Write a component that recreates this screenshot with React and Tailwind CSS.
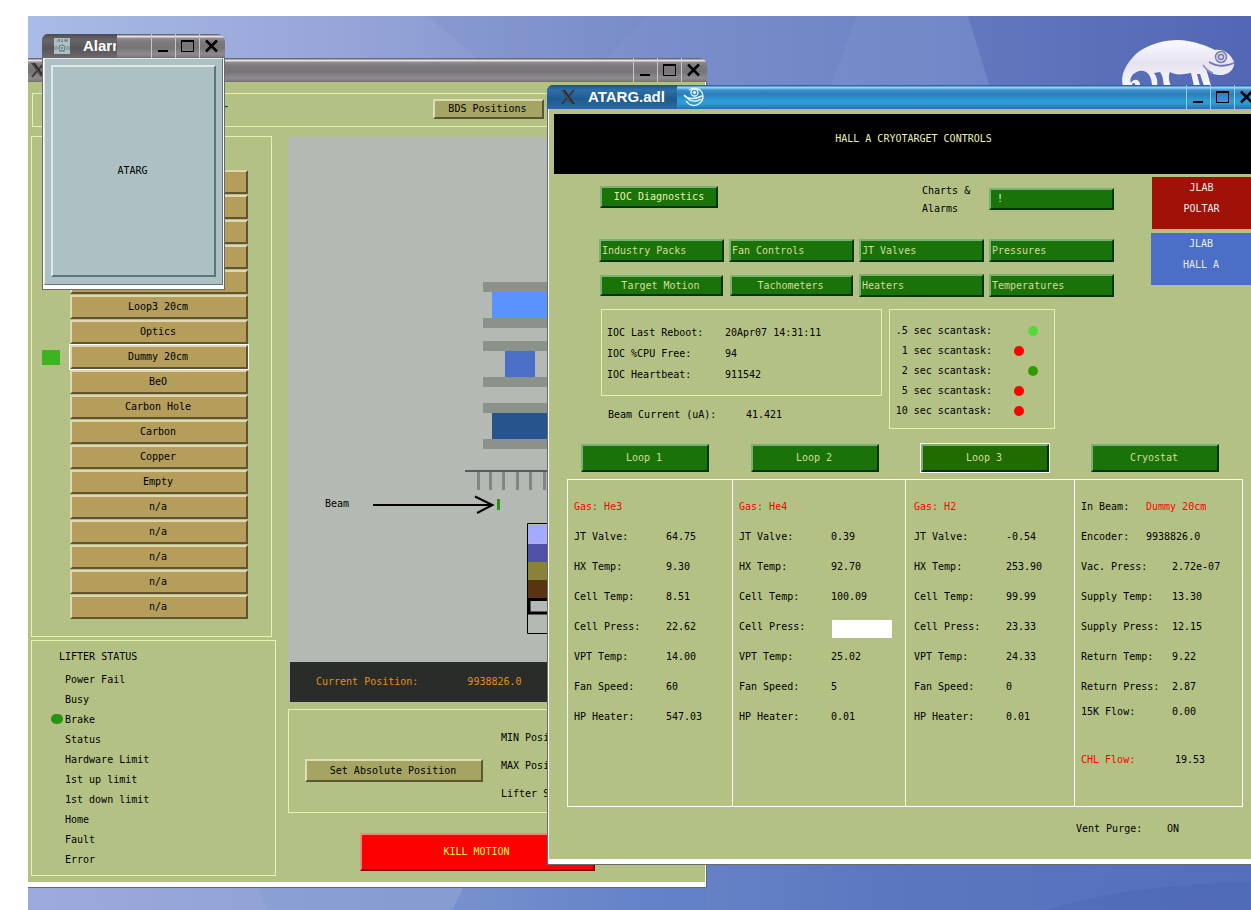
import clsx from 'clsx';

const TARGETS = ['', '', '', '', '', 'Loop3 20cm', 'Optics', 'Dummy 20cm', 'BeO', 'Carbon Hole', 'Carbon', 'Copper', 'Empty', 'n/a', 'n/a', 'n/a', 'n/a', 'n/a'];
const LIFTER = ['Power Fail', 'Busy', 'Brake', 'Status', 'Hardware Limit', '1st up limit', '1st down limit', 'Home', 'Fault', 'Error'];

const LOOPS = [
  { gas: 'He3', rows: [['JT Valve:', '64.75'], ['HX Temp:', '9.30'], ['Cell Temp:', '8.51'], ['Cell Press:', '22.62'], ['VPT Temp:', '14.00'], ['Fan Speed:', '60'], ['HP Heater:', '547.03']] },
  { gas: 'He4', rows: [['JT Valve:', '0.39'], ['HX Temp:', '92.70'], ['Cell Temp:', '100.09'], ['Cell Press:', null], ['VPT Temp:', '25.02'], ['Fan Speed:', '5'], ['HP Heater:', '0.01']] },
  { gas: 'H2', rows: [['JT Valve:', '-0.54'], ['HX Temp:', '253.90'], ['Cell Temp:', '99.99'], ['Cell Press:', '23.33'], ['VPT Temp:', '24.33'], ['Fan Speed:', '0'], ['HP Heater:', '0.01']] },
];

const CRYOSTAT = [['Vac. Press:', '2.72e-07'], ['Supply Temp:', '13.30'], ['Supply Press:', '12.15'], ['Return Temp:', '9.22'], ['Return Press:', '2.87']];

const SCANTASKS = [['.5 sec scantask:', 'ml-[36px] bg-[#52da3b]'], ['1 sec scantask:', 'ml-[22px] bg-[#fd0000]'], ['2 sec scantask:', 'ml-[36px] bg-[#339900]'], ['5 sec scantask:', 'ml-[22px] bg-[#fd0000]'], ['10 sec scantask:', 'ml-[22px] bg-[#fd0000]']];

const greyBar = 'bg-[linear-gradient(180deg,#6c696d_0px,#6c696d_1px,#e4e2e6_2px,#e4e2e6_3px,#918e92_4px,#7c797d_8px,#777478_14px,#8f8c90_20px,#757276_24px)]';
const blueBar = 'bg-[linear-gradient(180deg,#2a67a4_0px,#2a67a4_1px,#9ad6f6_2px,#8accf2_3px,#3f8fce_5px,#2c7fba_9px,#2f9dd6_16px,#2f98d0_19px,#2b6fae_24px)]';

function Wallpaper() {
  return (
    <svg className="absolute inset-0 h-full w-full" preserveAspectRatio="none" viewBox="0 0 1223 894" aria-hidden="true">
      <defs>
        <linearGradient id="sky" x1="0" x2="1" y1="0" y2="0">
          <stop offset="0" stopColor="#a9bbe6" />
          <stop offset="0.25" stopColor="#97a5d8" />
          <stop offset="0.5" stopColor="#7c8fcb" />
          <stop offset="0.75" stopColor="#6c82c4" />
          <stop offset="1" stopColor="#5569b6" />
        </linearGradient>
        <linearGradient id="ground" x1="0" x2="1" y1="0" y2="0">
          <stop offset="0" stopColor="#9daadc" />
          <stop offset="0.35" stopColor="#8a9dd2" />
          <stop offset="0.5" stopColor="#6a85c8" />
          <stop offset="0.7" stopColor="#5b77c0" />
          <stop offset="1" stopColor="#5470bb" />
        </linearGradient>
      </defs>
      <rect width="1223" height="894" fill="url(#sky)" />
      <path d="M400 0H620L560 60H470Z" fill="#7486c4" opacity="0.2" />
      <path d="M828 0H940L965 80H800Z" fill="#8098d2" opacity="0.3" />
      <path d="M940 0H1223V80H965Z" fill="#4b60b0" opacity="0.25" />
      <rect y="840" width="1223" height="54" fill="url(#ground)" />
      <path d="M228 860H420L436 894H238Z" fill="#7f9bd0" opacity="0.4" />
      <path d="M424 894L438 866H678V894Z" fill="#5c7fc8" opacity="0.4" />
      <path d="M1020 894Q1100 868 1223 866V894Z" fill="#4c63b4" opacity="0.4" />
    </svg>
  );
}

function Chameleon() {
  return (
    <svg className="absolute top-[22px] right-3.5 h-12 w-[120px]" viewBox="0 0 120 48" aria-hidden="true">
      <defs>
        <linearGradient id="skin" x1="0" x2="0" y1="0" y2="1">
          <stop offset="0" stopColor="#fbfafe" />
          <stop offset="0.5" stopColor="#e6e2f1" />
          <stop offset="1" stopColor="#f8f7fc" />
        </linearGradient>
      </defs>
      <path fill="url(#skin)" d="M6 48C3 38 8 26 20 15C32 6 46 2 62 2C78 3 90 8 98 12C107 11 113 16 116 22C120 27 114 38 102 37C97 37 92 34 89 31L91 37L94 48H87L83 36L80 36L83 48H77L74 35C64 37 58 37 53 34C51 38 52 43 54 48H47C46 42 46 38 43 34L37 35C40 39 41 43 40 48H35C35 38 30 31 22 33C15 35 12 41 14 45C17 39 24 42 23 48H18C19 45 17 44 15 46L15 48Z" />
      <circle cx="104" cy="19" r="5.500" fill="#d9d6ea" stroke="#7980b0" strokeWidth="1.5" />
      <circle cx="104" cy="19" r="2.500" fill="none" stroke="#7980b0" strokeWidth="1.5" />
      <path d="M92 24Q104 31 117 25" fill="none" stroke="#7077ae" strokeWidth="1.8" />
      <path d="M86 27Q90 33 96 35" fill="none" stroke="#8b90bd" strokeWidth="1.5" />
    </svg>
  );
}

function XIcon({ className }) {
  return (
    <svg className={className} width="16" height="16" viewBox="0 0 16 16" aria-hidden="true">
      <path d="M1 1H5L15 15H11Z" fill="#2c2c30" />
      <path d="M14 1L9 7M7 9L2 15" stroke="#3a3634" strokeWidth="1.800" />
      <path d="M2 1L12 15" stroke="#8d7c72" strokeWidth="0.6" />
    </svg>
  );
}

function AlhIcon() {
  return (
    <svg className="ml-3 shrink-0" width="16" height="16" viewBox="0 0 16 16" aria-hidden="true">
      <rect width="16" height="16" fill="#adc1c4" />
      <path d="M3 4L5 1L6 4M8 1V4H9M11 1V4M13 1V4M11 2.5H13" fill="none" stroke="#66797f" />
      <circle cx="8" cy="10" r="3" fill="none" stroke="#5f747c" />
      <circle cx="8" cy="10" r="1" fill="#5f747c" />
      <path d="M1 8V12M3 8V12M13 8V12M15 8V12M5 13H11" stroke="#718389" />
    </svg>
  );
}

function GeckoLogo() {
  return (
    <svg className="ml-1.5 shrink-0" width="22" height="22" viewBox="0 0 22 22" fill="none" stroke="#e8f7ff" aria-hidden="true">
      <path d="M6 4C12 0 19 3 20 10C20 17 13 22 6 18L3 15" strokeWidth="1.4" />
      <circle cx="11.500" cy="6.500" r="3.500" strokeWidth="1.3" />
      <circle cx="11.500" cy="6.500" r="1.200" fill="#e8f7ff" />
      <path d="M1 9C4 13 11 14 19 10M4 12C8 16 14 16 18 13" strokeWidth="1.5" />
    </svg>
  );
}

function WindowButtons({ blue }) {
  const btn = clsx('flex h-6 w-6 items-center justify-center border-l', blue ? 'border-[#8fc8f4]' : 'border-[#c9c6ca]');
  return (
    <div className="ml-auto flex shrink-0 pr-0.5">
      <button aria-label="Minimize" className={btn}>
        <svg width="14" height="14" viewBox="0 0 14 14"><path d="M1 12H11" stroke="#000" strokeWidth="2" /></svg>
      </button>
      <button aria-label="Maximize" className={btn}>
        <svg width="14" height="14" viewBox="0 0 14 14"><path d="M0.500 12.500V1.500H12.500V12.500Z" fill="none" stroke="#000" /><path d="M0 2H13" stroke="#000" strokeWidth="2" /></svg>
      </button>
      <button aria-label="Close" className={btn}>
        <svg width="14" height="14" viewBox="0 0 14 14"><path d="M1 1.500L12 12.500M1 12.500L12 1.500" fill="none" stroke="#000" strokeWidth="2.500" /></svg>
      </button>
    </div>
  );
}

function GreenButton({ children, className, ...rest }) {
  return (
    <button {...rest} className={clsx('border-2 border-t-[#78b173] border-r-[#083303] border-b-[#083303] border-l-[#78b173]', className)}>
      {children}
    </button>
  );
}

function AlarmWindow() {
  return (
    <section className="absolute top-[18px] left-[14px] w-[183px]">
      <header className={clsx('flex h-6 items-center overflow-hidden rounded-tl-md rounded-tr-lg', greyBar)}>
        <div className="flex h-6 w-[75px] items-center overflow-hidden bg-[linear-gradient(180deg,#4e4b4f,#69666a_6px,#58555a_14px,#6d6a6e)] font-[Liberation_Sans,sans-serif] text-[15px] font-bold text-white">
          <AlhIcon />
          <h2 className="ml-[13px] w-[33px] shrink-0 overflow-hidden whitespace-nowrap">Alarm</h2>
        </div>
        <WindowButtons />
      </header>
      <div className="border border-t-0 border-[#6c696d] bg-white px-px pb-1">
        <div className="border border-t-[#e0ebe8] border-r-[#5f7478] border-b-[#5f7478] border-l-[#e0ebe8] bg-[#adc1c4] px-1.5 pt-1.5 pb-[7px]">
          <button className="h-[212px] w-full border-2 border-t-[#dcebe8] border-r-[#5f7478] border-b-[#5f7478] border-l-[#dcebe8] pr-0.5">ATARG</button>
        </div>
      </div>
    </section>
  );
}

function TargetDrawing() {
  return (
    <svg className="block" width="412" height="525" viewBox="0 0 412 525" role="img" aria-label="Target ladder">
      <g fill="#8b9289">
        <path d="M195 145H412V155H195ZM195 181H412V191H195ZM195 204H412V214H195ZM195 240H412V250H195ZM195 266H412V276H195ZM195 302H412V312H195Z" />
      </g>
      <path d="M204 155H360V181H204Z" fill="#5893ff" />
      <path d="M217 214H247V240H217Z" fill="#4b6ec7" />
      <path d="M204 276H360V302H204Z" fill="#27548d" />
      <path d="M177 334H412" stroke="#5a5a5a" strokeWidth="2" />
      <path d="M190.500 335V353M202.500 335V353M215.500 335V353M229.500 335V353M242.500 335V353M256.500 335V353" stroke="#858585" strokeWidth="3" />
      <text x="37" y="370">Beam</text>
      <path d="M85 368H204" stroke="#000" strokeWidth="2" />
      <path d="M187 359.500L204.500 368L189 376" fill="none" stroke="#000" strokeWidth="2" />
      <path d="M209 362H212V373H209Z" fill="#289315" />
      <path d="M239.500 386.500H300V496.500H239.500Z" fill="none" stroke="#000" />
      <path d="M240 388H300V406H240Z" fill="#a4aaff" />
      <path d="M240 407H300V425H240Z" fill="#4d52a4" />
      <path d="M240 425H300V443H240Z" fill="#8b8239" />
      <path d="M240 443H300V461H240Z" fill="#58340f" />
      <path d="M241 462.500H300V476H241Z" fill="none" stroke="#000" strokeWidth="3" />
    </svg>
  );
}

function LifterWindow() {
  const frame = 'border border-[#e6f2b4]';
  const olive = 'border-2 border-t-[#dcdeb4] border-r-[#5a5832] border-b-[#5a5832] border-l-[#dcdeb4] bg-[#a6a462]';
  return (
    <section className="absolute top-[42px] left-0 w-[679px]">
      <header className={clsx('flex h-6 items-center overflow-hidden rounded-tr-lg', greyBar)}>
        <XIcon className="ml-0.5" />
        <WindowButtons />
      </header>
      <div className="border-r border-b border-[#6c696d] bg-white pr-px pb-[5px]">
        <div className="bg-[#b4c184] pt-[11px] pb-1.5">
          <div className={clsx('mx-1 flex h-[34px] items-start pt-[5px]', frame)}>
            <h2 className="w-[195px] pt-0.5 text-right">Hall A Target Lifter</h2>
            <button className={clsx('ml-[205px] h-5 w-[111px] pr-0.5 leading-4', olive)}>BDS Positions</button>
          </div>
          <div className="mt-[9px] ml-[3px] flex gap-3">
            <div className="flex w-[245px] shrink-0 flex-col gap-[3px]">
              <div className={clsx('mr-1 flex flex-col gap-px pt-[33px] pb-[17px] pl-2.5', frame)}>
                {TARGETS.map((name, i) => (
                  <div key={i} className="flex items-center gap-2.5">
                    <span className={clsx('h-[15px] w-[18px]', name === 'Dummy 20cm' && 'bg-[#3cb420]')} />
                    <button
                      aria-label={name || `Target ${i + 1}`}
                      className={clsx('h-6 w-[178px] border-2 border-t-[#e1d6b4] border-r-[#625430] border-b-[#625430] border-l-[#e1d6b4] bg-[#b59d5b] pr-0.5', name === 'Dummy 20cm' && 'ring-1 ring-white')}
                    >
                      {name}
                    </button>
                  </div>
                ))}
              </div>
              <div className={clsx('pt-1.5 pb-[5px] pl-[19px]', frame)}>
                <h3 className="mb-[3px] ml-2 h-5 leading-5">LIFTER STATUS</h3>
                <ul>
                  {LIFTER.map((s) => (
                    <li key={s} className="flex h-5 gap-0.5 leading-5">
                      <span className={clsx('mt-1 h-2.5 w-3 rounded-full', s === 'Brake' && 'bg-[#289315]')} />
                      {s}
                    </li>
                  ))}
                </ul>
              </div>
            </div>
            <div className="flex min-w-0 flex-1 flex-col pt-px">
              <div className="overflow-hidden bg-[#b3bab3]">
                <TargetDrawing />
                <div className="ml-0.5 flex h-10 items-center gap-[49px] bg-[#2a2c2a] pl-[26px] text-[#e19015]">
                  <span>Current Position:</span>
                  <span>9938826.0</span>
                </div>
              </div>
              <div className={clsx('mt-[7px] flex h-[104px] items-start gap-[18px] pl-4', frame)}>
                <button className={clsx('mt-[49px] h-[23px] w-[178px] pr-0.5', olive)}>Set Absolute Position</button>
                <div className="pt-[14px] leading-7">
                  <p>MIN Position</p>
                  <p>MAX Position</p>
                  <p>Lifter Speed</p>
                </div>
              </div>
              <button className="mt-5 ml-[72px] h-[38px] w-[235px] border-2 border-t-[#ff8080] border-r-[#820400] border-b-[#820400] border-l-[#ff8080] bg-[#fd0000] pr-0.5 text-[#fbf34a]">KILL MOTION</button>
            </div>
          </div>
        </div>
      </div>
    </section>
  );
}

function LoopTable({ loop }) {
  return (
    <table className="w-full table-fixed text-left">
      <colgroup>
        <col className="w-[92px]" />
        <col />
      </colgroup>
      <thead>
        <tr className="h-[30px] text-[#fd0000]">
          <th colSpan={2} className="font-normal">Gas: {loop.gas}</th>
        </tr>
      </thead>
      <tbody>
        {loop.rows.map(([label, value]) => (
          <tr key={label} className="h-[30px]">
            <th className="font-normal">{label}</th>
            <td>{value ?? <span className="mt-1 ml-px block h-[18px] w-[60px] bg-white" />}</td>
          </tr>
        ))}
      </tbody>
    </table>
  );
}

function CryostatTable() {
  return (
    <table className="w-full table-fixed text-left [&_th]:font-normal">
      <colgroup>
        <col className="w-[65px]" />
        <col className="w-[26px]" />
        <col />
      </colgroup>
      <tbody>
        <tr className="h-[30px]"><th>In Beam:</th><td colSpan={2} className="text-[#fd0000]">Dummy 20cm</td></tr>
        <tr className="h-[30px]"><th>Encoder:</th><td colSpan={2}>9938826.0</td></tr>
        {CRYOSTAT.map(([label, value]) => (
          <tr key={label} className="h-[30px]"><th colSpan={2}>{label}</th><td>{value}</td></tr>
        ))}
        <tr className="h-5"><th colSpan={2}>15K Flow:</th><td>0.00</td></tr>
        <tr className="h-[76px]"><th colSpan={2} className="text-[#fd0000]">CHL Flow:</th><td className="pl-[3px]">19.53</td></tr>
      </tbody>
    </table>
  );
}

function CryotargetWindow() {
  const menu = 'h-[23px] bg-[#1a7309] pl-px text-left text-[#d4db9d]';
  const push = 'bg-[#1a7309] pr-0.5 text-[#d4db9d]';
  const frame = 'border border-[#e6f2b4]';
  return (
    <section className="absolute top-[69px] -right-[9px] left-[519px]">
      <header className={clsx('flex h-6 items-center overflow-hidden rounded-t-md', blueBar)}>
        <div className="flex h-6 w-[130px] shrink-0 items-center bg-[linear-gradient(180deg,#1f4f88,#2f70a8_5px,#1f5a8f_14px,#2a6ca0)] font-[Liberation_Sans,sans-serif] text-[15px] font-bold text-white">
          <XIcon className="ml-[13px]" />
          <h1 className="ml-3">ATARG.adl</h1>
        </div>
        <GeckoLogo />
        <WindowButtons blue />
      </header>
      <div className="border border-t-0 border-[#6c696d] bg-white px-px pb-[5px]">
        <div className="bg-[#b4c184] pt-[5px] pb-5">
          <div className="mx-[5px] h-[60px] bg-black pt-[15px] pl-5 text-center leading-5 text-[#ebf1b5]">HALL A CRYOTARGET CONTROLS</div>

          <div className="flex items-start">
            <div className="ml-[50px] w-[515px] shrink-0 pt-2">
              <div className="flex h-9 items-start">
                <GreenButton className="mt-1 ml-px h-[22px] w-[118px] bg-[#1a7309] text-[#ebf1b5]">IOC Diagnostics</GreenButton>
                <label htmlFor="charts" className="ml-auto w-[67px] leading-[18px]">Charts &amp;<br />Alarms</label>
                <GreenButton id="charts" className="mt-1.5 h-[22px] w-[125px] bg-[#1a7309] pl-1.5 text-left text-[#ebf1b5]">!</GreenButton>
              </div>
              <div className="mt-[21px] grid grid-cols-4 gap-x-[5px] gap-y-3">
                <GreenButton className={menu}>Industry Packs</GreenButton>
                <GreenButton className={menu}>Fan Controls</GreenButton>
                <GreenButton className={menu}>JT Valves</GreenButton>
                <GreenButton className={menu}>Pressures</GreenButton>
                <GreenButton className={clsx('m-px', push)}>Target Motion</GreenButton>
                <GreenButton className={clsx('m-px', push)}>Tachometers</GreenButton>
                <GreenButton className={menu}>Heaters</GreenButton>
                <GreenButton className={menu}>Temperatures</GreenButton>
              </div>
            </div>
            <div className="mt-[3px] ml-[37px] flex w-[100px] shrink-0 flex-col gap-1 text-center leading-[21px] text-[#ececec]">
              <button className="ml-px h-[52px] bg-[#a01207] pb-2.5">JLAB<br />POLTAR</button>
              <button className="h-[52px] bg-[#4b6ec7] pb-2.5">JLAB<br />HALL A</button>
            </div>
          </div>

          <div className="mt-3 ml-[52px] flex items-start gap-[7px]">
            <div className="w-[281px]">
              <dl className={clsx('grid h-[87px] grid-cols-[118px_1fr] content-start pt-3 pl-[5px] leading-[21px]', frame)}>
                <dt>IOC Last Reboot:</dt><dd>20Apr07 14:31:11</dd>
                <dt>IOC %CPU Free:</dt><dd>94</dd>
                <dt>IOC Heartbeat:</dt><dd>911542</dd>
              </dl>
              <dl className="mt-[9px] ml-[7px] flex leading-5">
                <dt className="w-[138px]">Beam Current (uA):</dt><dd>41.421</dd>
              </dl>
            </div>
            <ul className={clsx('h-[120px] w-[166px] pt-[11px]', frame)}>
              {SCANTASKS.map(([label, dot]) => (
                <li key={label} className="flex h-5 items-center">
                  <span className="w-[102px] text-right">{label}</span>
                  <span className={clsx('h-2.5 w-2.5 rounded-full', dot)} />
                </li>
              ))}
            </ul>
          </div>

          <div className="mt-[15px] ml-8 flex gap-[42px]">
            <GreenButton className={clsx('h-7 w-32', push)}>Loop 1</GreenButton>
            <GreenButton className={clsx('h-7 w-32', push)}>Loop 2</GreenButton>
            <GreenButton className="h-7 w-32 bg-[#216c00] pr-0.5 text-[#d4db9d] ring-1 ring-white">Loop 3</GreenButton>
            <GreenButton className={clsx('h-7 w-32', push)}>Cryostat</GreenButton>
          </div>

          <div className="mt-[7px] mr-4 ml-[18px] grid h-[328px] w-[676px] grid-cols-[165px_173px_169px_1fr] divide-x divide-white border border-white">
            <div className="pt-3 pl-1.5"><LoopTable loop={LOOPS[0]} /></div>
            <div className="pt-3 pl-1.5"><LoopTable loop={LOOPS[1]} /></div>
            <div className="pt-3 pl-2"><LoopTable loop={LOOPS[2]} /></div>
            <div className="pt-3 pl-1.5"><CryostatTable /></div>
          </div>

          <dl className="mt-3 ml-[527px] flex leading-5">
            <dt className="w-[91px]">Vent Purge:</dt><dd>ON</dd>
          </dl>
        </div>
      </div>
    </section>
  );
}

export default function App() {
  return (
    <div className="flex h-screen overflow-hidden bg-white pt-4 pl-7 font-[DejaVu_Sans_Mono,monospace] text-[10px] leading-4 text-black">
      <main className="relative flex-1 overflow-hidden">
        <Wallpaper />
        <Chameleon />
        <LifterWindow />
        <AlarmWindow />
        <CryotargetWindow />
      </main>
    </div>
  );
}
